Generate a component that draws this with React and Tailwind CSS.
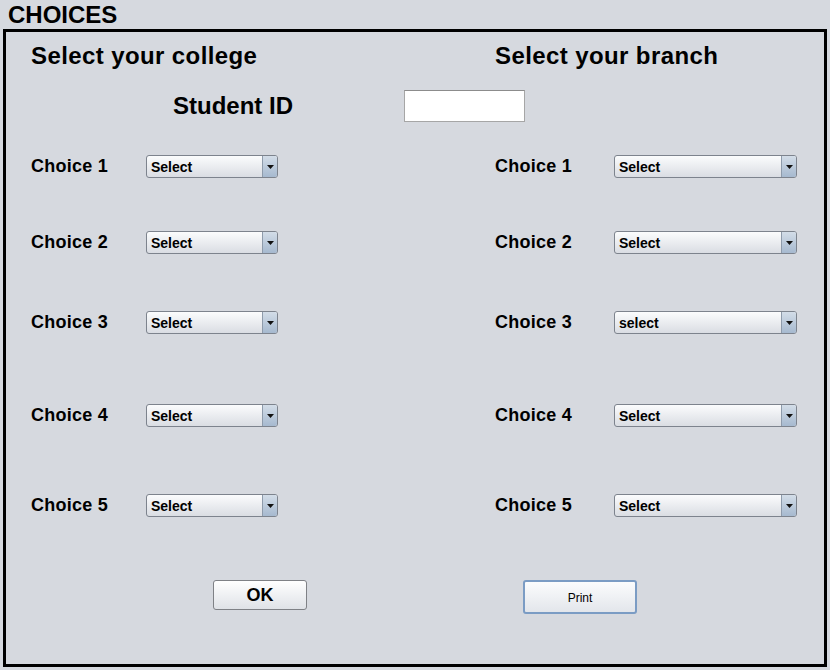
import React from "react";

const font = { fontFamily: '"Liberation Sans", Arial, sans-serif' };

function Dropdown({ width, value = "Select" }) {
  return (
    <div
      className={`flex h-[23px] ${width} rounded-[3px] border border-[#7d838d] bg-gradient-to-b from-[#fbfcfd] to-[#dadde3] overflow-hidden`}
    >
      <div className="flex-1 flex items-center pl-[4px] text-[14px] font-bold text-black leading-none">
        {value}
      </div>
      <div className="w-[15px] flex items-center justify-center border-l border-[#8e9bab] bg-gradient-to-b from-[#d3dde8] to-[#a6b9cf]">
        <svg width="7" height="4" viewBox="0 0 7 4">
          <path d="M0 0 H7 L3.5 4 Z" fill="#111" />
        </svg>
      </div>
    </div>
  );
}

function Label({ children, width }) {
  return (
    <div className={`${width} pt-[2px] text-[18px] font-bold leading-[18px] tracking-[0.25px] text-black`}>
      {children}
    </div>
  );
}

const rows = [
  { n: 1, mt: "mt-[33px]", right: "Select" },
  { n: 2, mt: "mt-[53px]", right: "Select" },
  { n: 3, mt: "mt-[57px]", right: "select" },
  { n: 4, mt: "mt-[70px]", right: "Select" },
  { n: 5, mt: "mt-[67px]", right: "Select" },
];

export default function App() {
  return (
    <div className="w-[830px] h-[670px] bg-[#d6d9df] overflow-hidden" style={font}>
      {/* title */}
      <div className="h-[29px] pt-[1px] pl-[8px] text-[24px] font-bold leading-[28px] text-black">
        CHOICES
      </div>

      <div className="mx-[3px] h-[638px] border-[3px] border-black pl-[25px] pt-[10px]">
        {/* headings */}
        <div className="flex text-[24px] font-bold leading-[28px] tracking-[0.4px] text-black">
          <div className="w-[464px]">Select your college</div>
          <div>Select your branch</div>
        </div>

        {/* student id */}
        <div className="mt-[20px] flex h-[32px] items-center pl-[142px]">
          <div className="w-[231px] text-[24px] font-bold leading-[28px] text-black">
            Student ID
          </div>
          <input
            type="text"
            className="h-[32px] w-[121px] border border-[#a6a6a6] border-t-[#8c8c8c] bg-white outline-none"
          />
        </div>

        {/* choices */}
        {rows.map((r) => (
          <div key={r.n} className={`${r.mt} flex items-start h-[23px]`}>
            <div className="w-[464px] flex items-start">
              <Label width="w-[115px]">Choice {r.n}</Label>
              <Dropdown width="w-[132px]" />
            </div>
            <div className="flex items-start">
              <Label width="w-[119px]">Choice {r.n}</Label>
              <Dropdown width="w-[183px]" value={r.right} />
            </div>
          </div>
        ))}

        {/* buttons */}
        <div className="mt-[63px] flex items-start">
          <div className="w-[464px] pl-[182px]">
            <button className="h-[30px] w-[94px] rounded-[3px] border border-[#7f8186] bg-gradient-to-b from-[#ffffff] to-[#dfe2e7] text-[18px] font-bold leading-none text-black">
              OK
            </button>
          </div>
          <div className="pl-[28px]">
            <button className="h-[34px] w-[114px] rounded-[3px] border-2 border-[#7b9cc4] bg-gradient-to-b from-[#fbfcfd] to-[#e3e6eb] pt-[2px] text-[12px] leading-none text-black">
              Print
            </button>
          </div>
        </div>
      </div>
    </div>
  );
}
